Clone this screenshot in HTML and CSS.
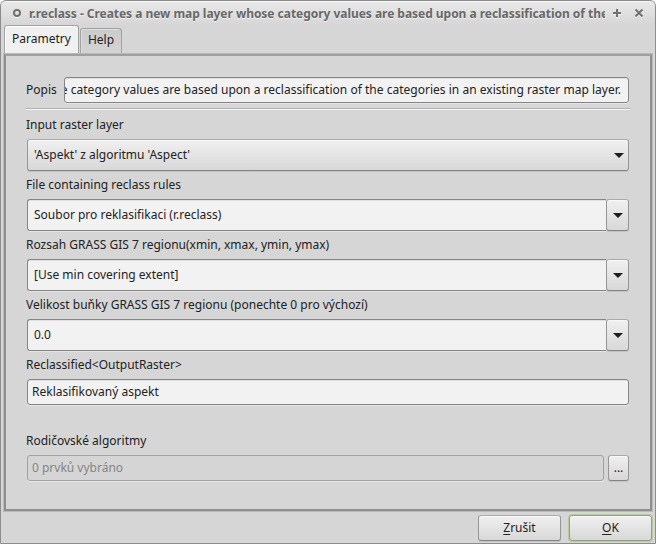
FILE: index.html
```html
<!DOCTYPE html>
<html lang="cs">
<head>
<meta charset="utf-8">
<title>r.reclass</title>
<link rel="stylesheet" href="styles.css">
</head>
<body>
<main class="window">
  <header class="titlebar">
    <svg class="ring" width="10" height="10" viewBox="0 0 10 10"><circle class="glow" cx="5" cy="6" r="3"/><circle cx="5" cy="5" r="3"/></svg>
    <h1>r.reclass - Creates a new map layer whose category values are based upon a reclassification of the</h1>
    <svg class="plus" width="10" height="10" viewBox="0 0 10 10"><path class="glow" d="M1 6H9M5 2V10"/><path d="M1 5H9M5 1V9"/></svg>
    <svg class="close" width="10" height="10" viewBox="0 0 10 10"><path class="glow" d="M1.5 2.5L8.5 9.5M8.5 2.5L1.5 9.5"/><path d="M1.5 1.5L8.5 8.5M8.5 1.5L1.5 8.5"/></svg>
  </header>
  <nav class="tabs">
    <div class="tab active">Parametry</div>
    <div class="tab">Help</div>
  </nav>
  <section class="pane">
    <div class="description">
      <label>Popis</label>
      <div class="field scrolled"><span>e category values are based upon a reclassification of the categories in an existing raster map layer.</span></div>
    </div>
    <hr>
    <label>Input raster layer</label>
    <div class="select"><span>'Aspekt' z algoritmu 'Aspect'</span><i class="arrow"></i></div>
    <label>File containing reclass rules</label>
    <div class="combo"><div class="value">Soubor pro reklasifikaci (r.reclass)</div><div class="drop"><i class="arrow"></i></div></div>
    <label>Rozsah GRASS GIS 7 regionu(xmin, xmax, ymin, ymax)</label>
    <div class="combo"><div class="value">[Use min covering extent]</div><div class="drop"><i class="arrow"></i></div></div>
    <label>Velikost buňky GRASS GIS 7 regionu (ponechte 0 pro výchozí)</label>
    <div class="combo"><div class="value">0.0</div><div class="drop"><i class="arrow"></i></div></div>
    <label>Reclassified&lt;OutputRaster&gt;</label>
    <div class="field output">Reklasifikovaný aspekt</div>
    <label class="parents">Rodičovské algoritmy</label>
    <div class="picker"><div class="field disabled">0 prvků vybráno</div><div class="button more">...</div></div>
  </section>
  <footer class="actions">
    <div class="button"><span><u>Z</u>rušit</span></div>
    <div class="button primary"><span><u>O</u>K</span></div>
  </footer>
</main>
</body>
</html>
```

FILE: styles.css
```css
* { box-sizing: border-box; }
body {
  margin: 0;
  background: #fff;
  font: 12px/18px "Noto Sans", sans-serif;
  color: #222;
  overflow: hidden;
}
.window {
  width: 656px;
  height: 544px;
  border: 1px solid #8c8c8c;
  border-radius: 6px 6px 0 0;
  background: linear-gradient(#e9e9e9, #d6d6d6 24px);
  box-shadow: inset 0 1px #f8f8f8;
  display: flex;
  flex-direction: column;
}
.titlebar {
  height: 24px;
  flex: none;
  display: flex;
  align-items: center;
  padding: 0 10px 0 11px;
}
.titlebar svg { flex: none; fill: none; stroke: #707070; stroke-width: 2; }
.titlebar .glow { stroke: #f5f5f5; }
.titlebar h1 {
  margin: 0 0 0 7px;
  width: 576px;
  flex: none;
  overflow: hidden;
  white-space: nowrap;
  font-size: 12px;
  letter-spacing: -.035px;
  line-height: 25px;
  color: #686868;
  text-shadow: 0 1px #f0f0f0;
}
.plus { margin-left: 7px; }
.close { margin-left: 12px; }
.tabs {
  height: 29px;
  flex: none;
  display: flex;
  align-items: flex-end;
  padding-left: 3px;
  gap: 1px;
}
.tab {
  height: 26px;
  width: 42px;
  border: 1px solid #a2a2a2;
  border-bottom: 0;
  border-radius: 3px 3px 0 0;
  background: linear-gradient(#cbcbcb, #d4d4d4);
  box-shadow: inset 1px 1px #dedede;
  text-align: center;
  line-height: 22px;
}
.tab.active {
  height: 29px;
  width: 75px;
  background: #f0f0f0;
  box-shadow: inset 1px 1px #fff;
  line-height: 26px;
}
.pane {
  height: 457px;
  flex: none;
  margin: 0 3px;
  border: 2px solid #8f8f8f;
  border-top-color: #a0a0a0;
  box-shadow: 0 0 0 1px #b9b9b9;
  padding: 21px 21px 0 20px;
  display: flex;
  flex-direction: column;
}
.description { display: flex; align-items: center; }
.description label { width: 38px; }
label { height: 18px; line-height: 18px; white-space: nowrap; }
.field {
  height: 26px;
  border: 1px solid #858585;
  border-radius: 3px;
  background: #f2f2f2;
  box-shadow: inset 0 1px #e0e0e0, 0 1px #e4e4e4;
  padding: 0 4px;
  line-height: 24px;
  white-space: nowrap;
}
.scrolled {
  flex: 1;
  overflow: hidden;
  display: flex;
  justify-content: flex-end;
  padding: 0 7px 0 0;
  letter-spacing: .015px;
}
hr {
  width: 604px;
  height: 2px;
  margin: 5px 0 6px;
  border: 0;
  border-top: 1px solid #b1b1b1;
  background: #f4f4f4;
}
.select, .combo {
  height: 32px;
  margin: 5px 0 5px 1px;
  display: flex;
}
.select {
  align-items: center;
  justify-content: space-between;
  padding: 0 4px 0 6px;
}
.select, .drop, .button {
  border: 1px solid #969696;
  border-top-color: #ababab;
  border-bottom-color: #858585;
  border-radius: 3px;
  background: linear-gradient(#f0f0f0, #d8d8d8);
  box-shadow: inset 0 1px #f9f9f9, 0 1px #c4c4c4;
}
.value {
  flex: 1;
  border: 1px solid #858585;
  border-right: 0;
  border-radius: 3px 0 0 3px;
  background: #f2f2f2;
  box-shadow: inset 0 1px #e0e0e0, 0 1px #e4e4e4;
  padding-left: 6px;
  line-height: 30px;
}
.drop {
  width: 23px;
  display: flex;
  align-items: center;
  justify-content: center;
}
.arrow { border: 5px solid transparent; border-top-color: #1d1d1d; border-bottom: 0; }
.output { margin: 5px 0 0 1px; }
.parents { margin-top: 27px; }
.picker { display: flex; gap: 4px; margin: 5px 0 0 1px; }
.disabled {
  flex: 1;
  background: #d5d5d5;
  border-color: #a2a2a2;
  color: #858585;
  box-shadow: 0 1px #e8e8e8;
}
.button {
  width: 83px;
  height: 26px;
  line-height: 24px;
  text-align: center;
}
.button u { text-underline-offset: 2px; text-decoration-thickness: 1px; }
.more { width: 21px; }
.actions {
  display: flex;
  justify-content: flex-end;
  gap: 8px;
  padding: 4px 3px 0;
}
.primary {
  border-color: #93a080;
  box-shadow: inset 0 1px #f9f9f9, 0 0 0 1px #b7cb9f;
}
```
